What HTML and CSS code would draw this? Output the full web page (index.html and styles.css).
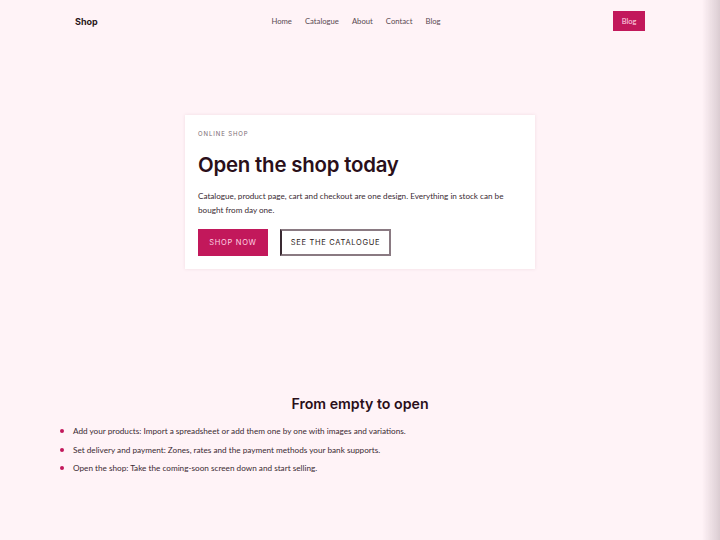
FILE: index.html
```html
<!DOCTYPE html>
<html lang="en">
<head>
<meta charset="utf-8">
<title>Shop</title>
<link rel="stylesheet" href="styles.css">
</head>
<body>
<header class="nav">
  <div class="brand">Shop</div>
  <nav class="links">
    <a href="#">Home</a>
    <a href="#">Catalogue</a>
    <a href="#">About</a>
    <a href="#">Contact</a>
    <a href="#">Blog</a>
  </nav>
  <div class="nav-end"><a class="nav-btn" href="#">Blog</a></div>
</header>

<section class="hero">
  <div class="card">
    <div class="eyebrow">ONLINE SHOP</div>
    <h1>Open the shop today</h1>
    <p>Catalogue, product page, cart and checkout are one design. Everything in stock can be bought from day one.</p>
    <div class="actions">
      <a class="btn primary" href="#">SHOP NOW</a>
      <a class="btn outline" href="#">SEE THE CATALOGUE</a>
    </div>
  </div>
</section>

<section class="steps">
  <h2>From empty to open</h2>
  <ul>
    <li>Add your products: Import a spreadsheet or add them one by one with images and variations.</li>
    <li>Set delivery and payment: Zones, rates and the payment methods your bank supports.</li>
    <li>Open the shop: Take the coming-soon screen down and start selling.</li>
  </ul>
</section>
<div class="edge"></div>
</body>
</html>
```

FILE: styles.css
```css
* { box-sizing: border-box; }
html, body { margin: 0; padding: 0; }
body {
  background: #fff3f7;
  font-family: Lato, "Noto Sans", sans-serif;
  color: #2a1820;
  width: 720px;
  height: 540px;
  overflow: hidden;
}
a { text-decoration: none; color: inherit; }

.nav {
  display: grid;
  grid-template-columns: 1fr auto 1fr;
  align-items: center;
  padding: 11px 75px 0 75px;
  height: 31px;
}
.brand {
  font-family: Inter, "Noto Sans", sans-serif;
  font-weight: 700;
  font-size: 9px;
  color: #2a1820;
}
.links { display: flex; gap: 13px; font-size: 7.7px; color: #5a4a52; margin-right: 8px; }
.nav-end { display: flex; justify-content: flex-end; }
.nav-btn {
  background: #c2185b;
  color: #ffd9e6;
  font-size: 7.5px;
  width: 32px;
  height: 20px;
  display: flex;
  align-items: center;
  justify-content: center;
}

.hero {
  display: flex;
  justify-content: center;
  padding-top: 84px;
}
.card {
  width: 350px;
  background: #ffffff;
  padding: 14px 13px 13px 13px;
  box-shadow: 0 0 3px rgba(200, 150, 170, 0.25);
}
.eyebrow {
  font-family: Inter, "Noto Sans", sans-serif;
  font-size: 6px;
  letter-spacing: 0.9px;
  color: #7a6a72;
  line-height: 8px;
  margin-top: 1px;
}
h1 {
  font-family: Inter, "Noto Sans", sans-serif;
  font-weight: 600;
  font-size: 20.4px;
  line-height: 24px;
  letter-spacing: -0.2px;
  color: #2a0f1a;
  margin: 15px 0 12px 0;
}
.card p {
  font-size: 8.15px;
  line-height: 14px;
  margin: 0 0 12px 0;
  color: #3a2a32;
}
.actions { display: flex; gap: 12px; }
.btn {
  height: 27px;
  display: flex;
  align-items: center;
  justify-content: center;
  font-family: Inter, "Noto Sans", sans-serif;
  font-size: 7.5px;
  letter-spacing: 0.7px;
}
.primary { background: #c2185b; color: #ffd3e2; width: 70px; }
.outline {
  width: 111px;
  border: 2px solid #8a7a82;
  border-left-color: #3a2a32;
  color: #2a1820;
  background: #fff;
}

.steps { padding: 126px 60px 0 60px; }
h2 {
  text-align: center;
  font-family: Inter, "Noto Sans", sans-serif;
  font-weight: 600;
  font-size: 14.2px;
  line-height: 18px;
  margin: 0 0 9px 0;
  color: #2a0f1a;
}
ul { list-style: none; margin: 0; padding: 0; }
li {
  position: relative;
  padding-left: 13px;
  font-size: 8.2px;
  line-height: 18.5px;
  color: #3a2a32;
}
li::before {
  content: "";
  position: absolute;
  left: 0;
  top: 7px;
  width: 4px;
  height: 4px;
  border-radius: 50%;
  background: #c2185b;
}

.edge {
  position: fixed;
  top: 0;
  right: 0;
  width: 18px;
  height: 540px;
  background: linear-gradient(to right, rgba(220, 200, 208, 0), rgba(215, 200, 206, 0.9));
  pointer-events: none;
}
```
